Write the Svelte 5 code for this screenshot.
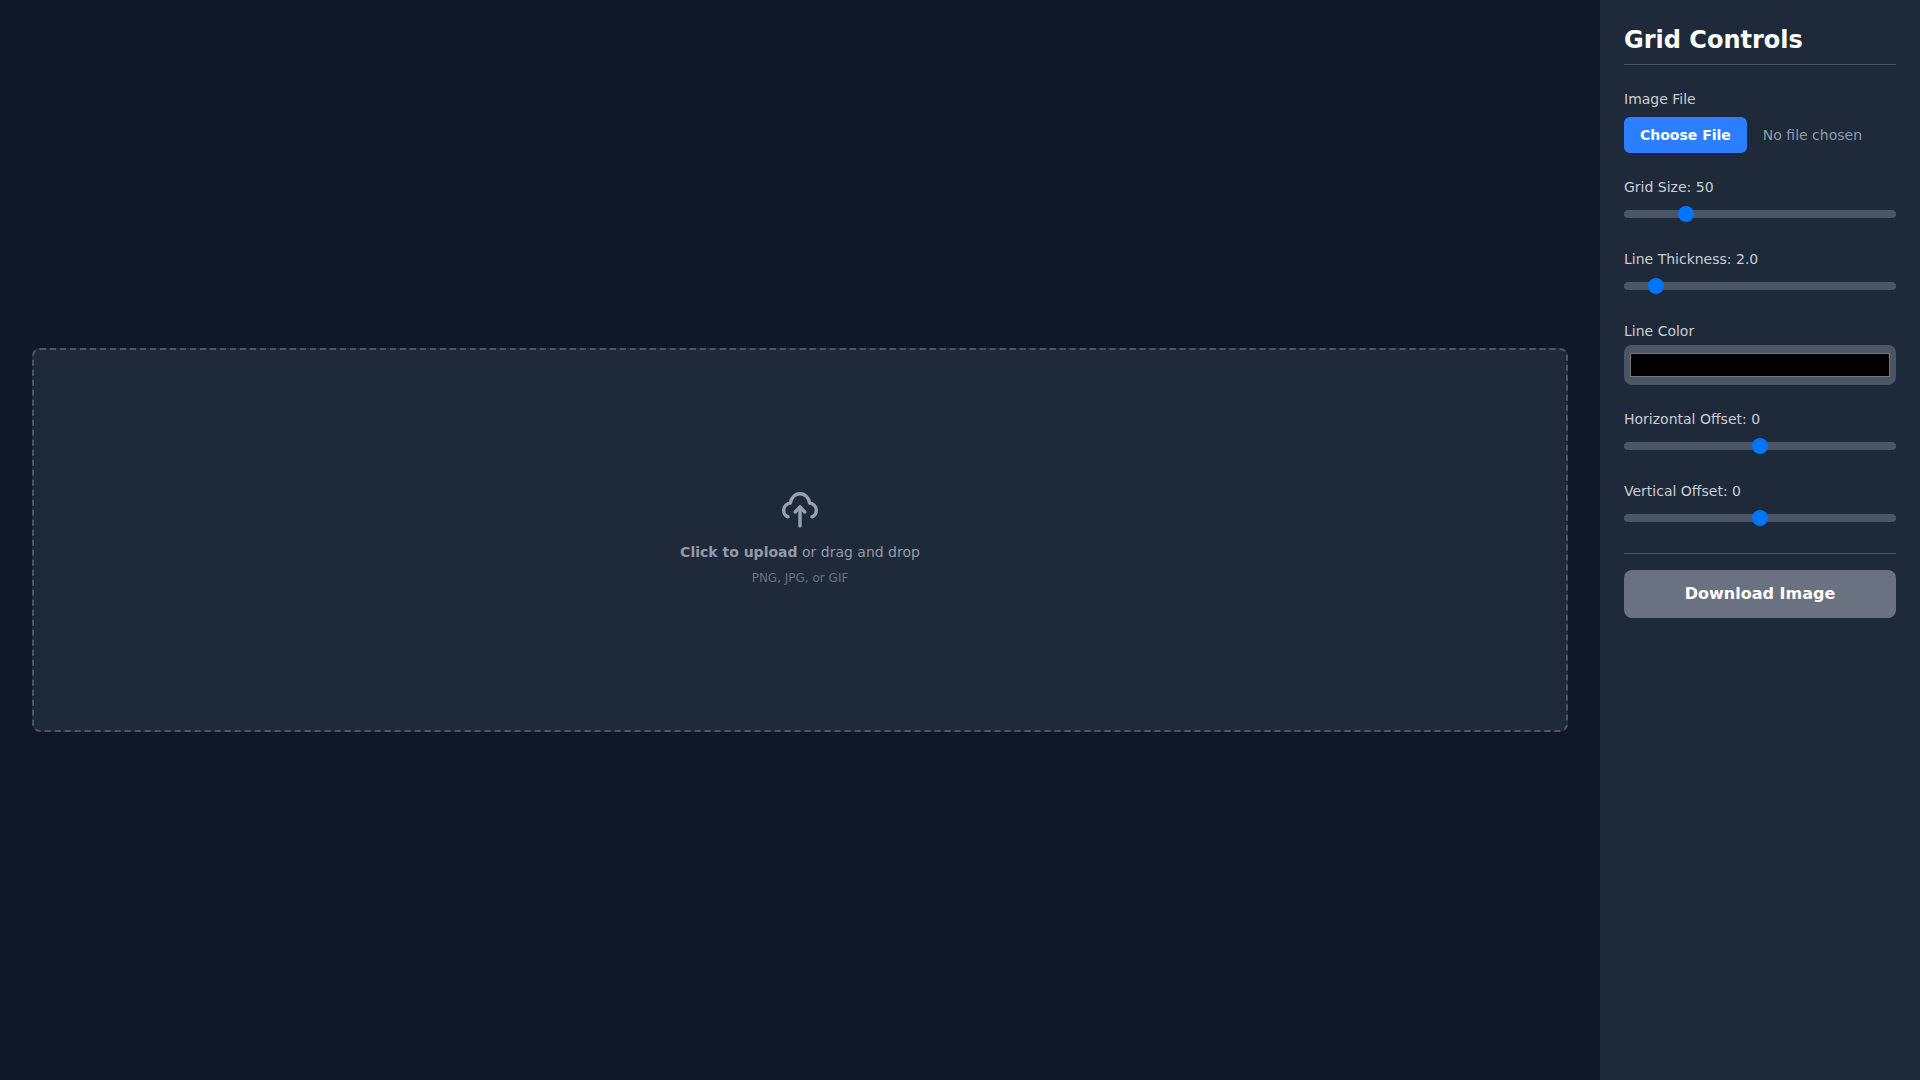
<script lang="ts">
	let fileName = $state('');
	let gridSize = $state(50);
	let thickness = $state(2);
	let lineColor = $state('#000000');
	let offsetX = $state(0);
	let offsetY = $state(0);

	function handleFile(event: Event) {
		const input = event.target as HTMLInputElement;
		fileName = input.files?.[0]?.name ?? '';
	}
</script>

<div class="app">
	<main class="workspace">
		<label class="dropzone">
			<input class="hidden-input" type="file" accept="image/png,image/jpeg,image/gif" onchange={handleFile} />
			<svg class="upload-icon" viewBox="0 0 40 40" fill="none" stroke="currentColor" stroke-width="3.4" stroke-linecap="round" stroke-linejoin="round">
				<path d="M8 26.800C5.300 25.800 3.700 23.200 3.700 20.500 3.700 16.500 6.700 13.400 10.400 13 11.200 7.700 15 3.700 20 3.700s8.800 4 9.600 9.300C33.300 13.400 36.300 16.500 36.300 20.500 36.300 23.200 34.700 25.800 32 26.800"></path>
				<path d="M20 36V17"></path>
				<path d="M15.200 22 20 17l4.800 5"></path>
			</svg>
			<p class="drop-text"><strong>Click to upload</strong> or drag and drop</p>
			<p class="drop-hint">PNG, JPG, or GIF</p>
		</label>
	</main>

	<aside class="sidebar">
		<h2>Grid Controls</h2>

		<div class="field">
			<label for="image-file">Image File</label>
			<input id="image-file" class="file" type="file" accept="image/*" onchange={handleFile} />
		</div>

		<div class="field">
			<label for="grid-size">Grid Size: {gridSize}</label>
			<input id="grid-size" class="slider" type="range" min="10" max="200" bind:value={gridSize} />
		</div>

		<div class="field">
			<label for="thickness">Line Thickness: {thickness.toFixed(1)}</label>
			<input id="thickness" class="slider" type="range" min="0.5" max="16.5" step="0.5" bind:value={thickness} />
		</div>

		<div class="field">
			<label class="tight" for="line-color">Line Color</label>
			<input id="line-color" class="color" type="color" bind:value={lineColor} />
		</div>

		<div class="field">
			<label for="offset-x">Horizontal Offset: {offsetX}</label>
			<input id="offset-x" class="slider" type="range" min="-100" max="100" bind:value={offsetX} />
		</div>

		<div class="field">
			<label for="offset-y">Vertical Offset: {offsetY}</label>
			<input id="offset-y" class="slider" type="range" min="-100" max="100" bind:value={offsetY} />
		</div>

		<div class="actions">
			<button class="download" disabled={!fileName}>Download Image</button>
		</div>
	</aside>
</div>

<style>
	:global(body) {
		margin: 0;
		background: #101828;
	}

	.app {
		display: flex;
		height: 100vh;
		overflow: hidden;
		font-family: "DejaVu Sans", sans-serif;
		color: #fff;
	}

	.workspace {
		flex: 1;
		min-width: 0;
		display: flex;
		align-items: center;
		justify-content: center;
		padding: 32px;
		background: #101828;
	}

	.dropzone {
		box-sizing: border-box;
		width: 100%;
		height: 384px;
		padding-bottom: 4px;
		display: flex;
		flex-direction: column;
		align-items: center;
		justify-content: center;
		background: #1e2939;
		border: 2px dashed #4a5565;
		border-radius: 8px;
		cursor: pointer;
	}

	.hidden-input {
		display: none;
	}

	.upload-icon {
		width: 40px;
		height: 40px;
		margin-bottom: 12px;
		color: #99a1af;
	}

	.drop-text {
		margin: 0 0 8px;
		font-size: 14px;
		line-height: 20px;
		color: #939baa;
	}

	.drop-hint {
		margin: 0;
		font-size: 12px;
		line-height: 16px;
		color: #6a7282;
	}

	.sidebar {
		box-sizing: border-box;
		flex: none;
		width: 320px;
		padding: 24px;
		background: #1e2939;
		display: flex;
		flex-direction: column;
		gap: 24px;
	}

	h2 {
		margin: 0;
		padding-bottom: 8px;
		font-size: 24px;
		line-height: 32px;
		font-weight: 700;
		color: #fff;
		border-bottom: 1px solid #4a5565;
	}

	.field {
		display: flex;
		flex-direction: column;
	}

	.field label {
		display: block;
		margin-bottom: 8px;
		font-size: 14px;
		line-height: 20px;
		color: #c9ced6;
	}

	.field label.tight {
		margin-bottom: 4px;
	}

	.file {
		display: block;
		width: 100%;
		height: 36px;
		padding: 0;
		font-family: inherit;
		font-size: 14px;
		line-height: 20px;
		color: #939baa;
	}

	.file::file-selector-button {
		height: 36px;
		margin-right: 16px;
		padding: 0 16px;
		border: 0;
		border-radius: 6px;
		background: #2b7fff;
		color: #fff;
		font-family: inherit;
		font-size: 14px;
		font-weight: 600;
		cursor: pointer;
	}

	.slider {
		-webkit-appearance: none;
		appearance: none;
		display: block;
		width: 100%;
		height: 8px;
		margin: 5px 0 7px;
		background: #4a5565;
		border-radius: 8px;
		cursor: pointer;
	}

	.slider::-webkit-slider-thumb {
		-webkit-appearance: none;
		appearance: none;
		width: 16px;
		height: 16px;
		border-radius: 50%;
		background: #0075ff;
	}

	.color {
		display: block;
		box-sizing: border-box;
		width: 100%;
		height: 40px;
		margin: 0;
		padding: 4px;
		background: #4a5565;
		border: 0;
		border-radius: 8px;
		cursor: pointer;
	}

	.actions {
		border-top: 1px solid #4a5565;
		padding-top: 16px;
	}

	.download {
		display: block;
		width: 100%;
		height: 48px;
		padding: 0 0 2px;
		border: 0;
		border-radius: 8px;
		background: #6a7282;
		color: #fff;
		font-family: inherit;
		font-size: 16px;
		font-weight: 700;
	}
</style>
